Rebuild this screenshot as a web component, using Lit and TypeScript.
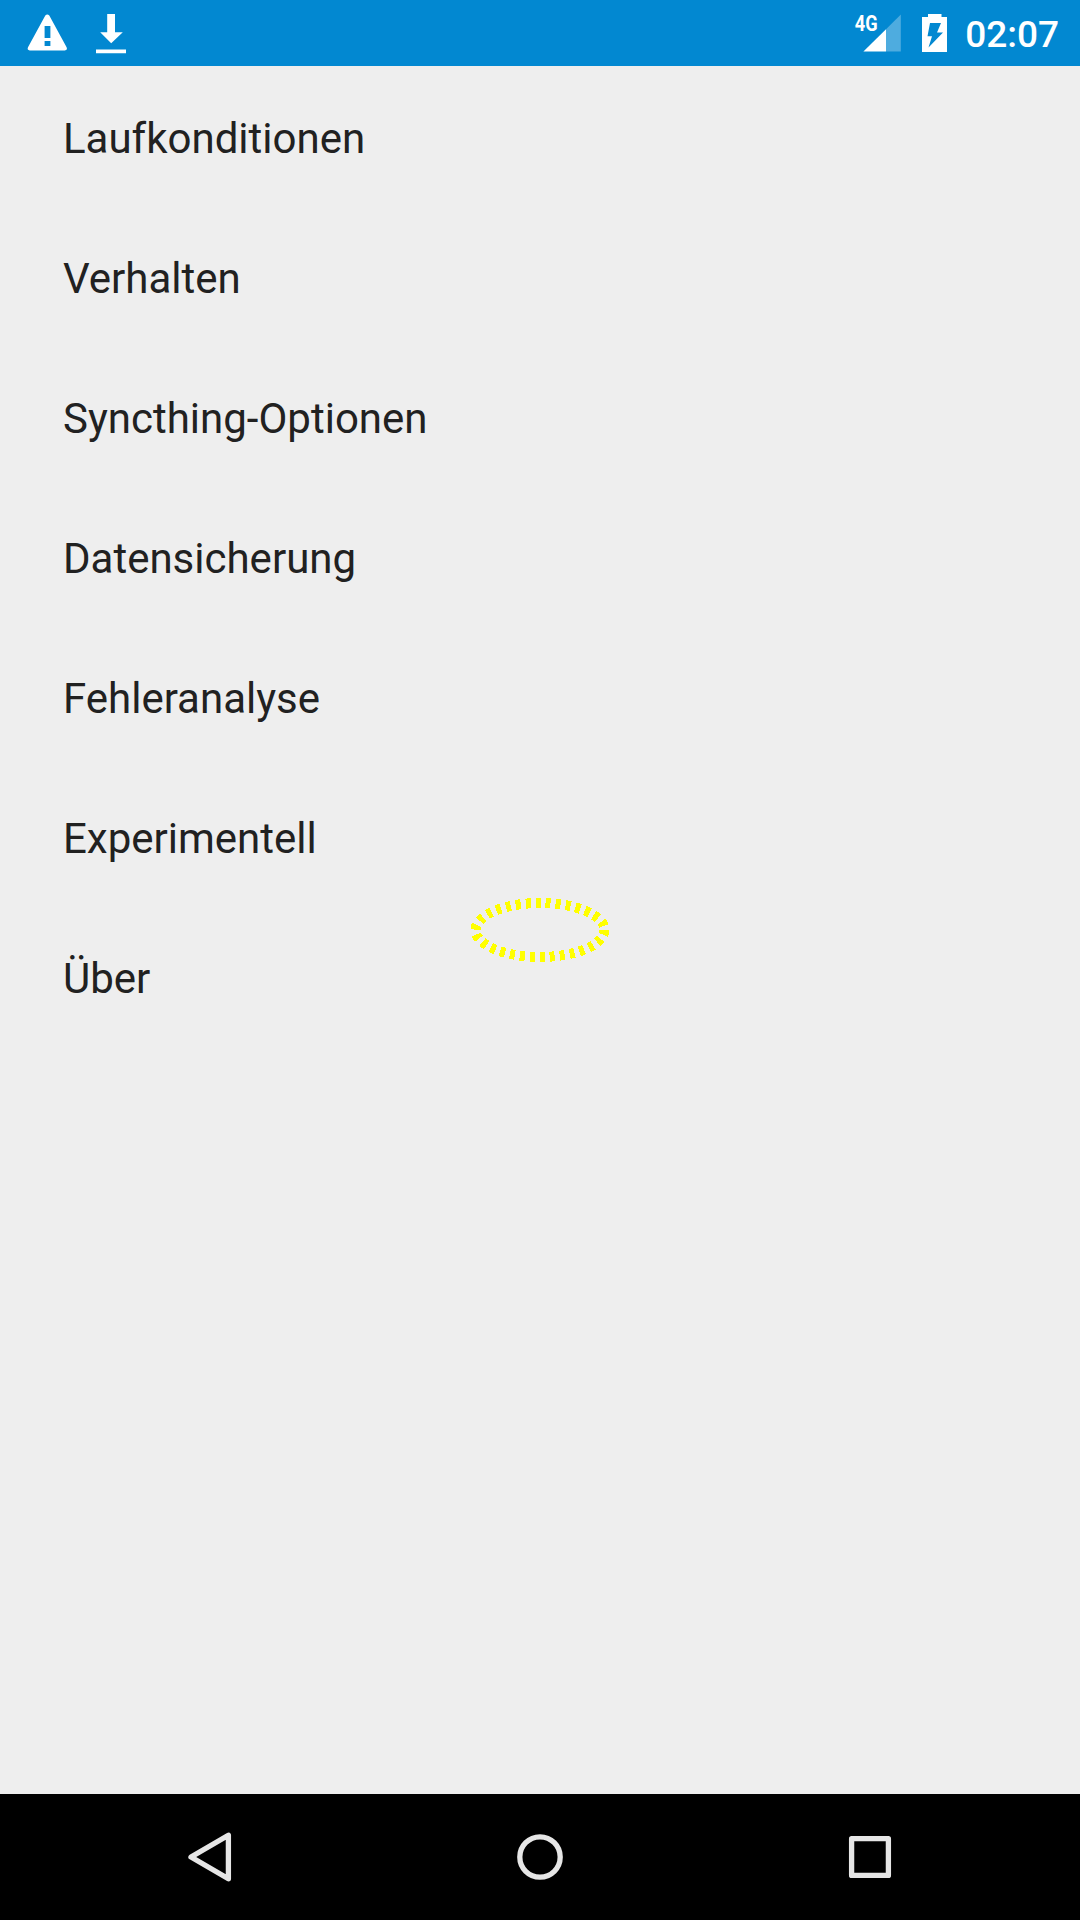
import { LitElement, html, css } from "lit";
import { customElement, property } from "lit/decorators.js";

@customElement("status-bar")
class StatusBar extends LitElement {
  @property() time = "";

  static styles = css`
    :host {
      display: flex;
      justify-content: space-between;
      height: 66px;
      padding: 0 21px 0 18px;
      box-sizing: border-box;
      background: #0288d1;
      color: #fff;
    }
    .group {
      display: flex;
      align-items: center;
    }
    .notifications {
      gap: 6px;
    }
    .icon {
      display: block;
      fill: #fff;
    }
    .signal {
      margin-right: 14px;
    }
    .battery {
      margin-right: 16px;
    }
    .network {
      font: 700 22px Roboto, sans-serif;
    }
    .clock {
      padding-top: 4px;
      font: 500 37px/62px Roboto, sans-serif;
    }
  `;

  render() {
    return html`
      <div class="group notifications">
        <svg class="icon" width="58" height="66" viewBox="18 0 58 66">
          <path
            fill-rule="evenodd"
            d="M45.3 15.6Q47.3 13.2 49.3 15.6L66.6 47.3Q67.8 50.3 64.8 50.4H29.8Q26.8 50.3 28 47.3ZM44.6 26V38H50.4V26ZM44.6 41V46H50.4V41Z"
          />
        </svg>
        <svg class="icon" width="58" height="66" viewBox="82 0 58 66">
          <path d="M107.2 14H115V32.2H122.8L111.2 43.2L100.2 32.2H107.2ZM96 49.5H126V53.3H96Z" />
        </svg>
      </div>
      <div class="group">
        <svg class="icon signal" width="50" height="66" viewBox="853 0 50 66">
          <path opacity="0.3" d="M886 29.2L900.8 14.4V51.5H886Z" />
          <path d="M863.4 51.5L886 29.2V51.5Z" />
          <text class="network" x="854.8" y="31" textLength="22.8" lengthAdjust="spacingAndGlyphs">4G</text>
        </svg>
        <svg class="icon battery" width="32" height="66" viewBox="917 0 32 66">
          <path
            fill-rule="evenodd"
            d="M928 14H941.5V17H947V52H922V17H928ZM930 23L927.5 36.3H932L928.5 47.5L943 32.5H937L941 23Z"
          />
        </svg>
        <span class="clock">${this.time}</span>
      </div>
    `;
  }
}

@customElement("navigation-bar")
class NavigationBar extends LitElement {
  static styles = css`
    :host {
      display: flex;
      height: 126px;
      padding: 0 45px;
      box-sizing: border-box;
      background: #000;
    }
    .button {
      flex: 1;
      display: flex;
      align-items: center;
      justify-content: center;
    }
    .icon {
      display: block;
      fill: none;
      stroke: #e6e6e6;
      stroke-width: 5.3;
      stroke-linejoin: round;
    }
  `;

  render() {
    return html`
      <div class="button">
        <svg class="icon" width="60" height="60" viewBox="0 0 60 60">
          <path d="M48.4 8.2V51.8L11 30Z" />
        </svg>
      </div>
      <div class="button">
        <svg class="icon" width="60" height="60" viewBox="0 0 60 60">
          <circle cx="30" cy="30" r="20.2" />
        </svg>
      </div>
      <div class="button">
        <svg class="icon" width="60" height="60" viewBox="0 0 60 60">
          <rect x="11.6" y="11.6" width="36.8" height="36.8" />
        </svg>
      </div>
    `;
  }
}

@customElement("app-root")
class AppRoot extends LitElement {
  private entries = [
    "Laufkonditionen",
    "Verhalten",
    "Syncthing-Optionen",
    "Datensicherung",
    "Fehleranalyse",
    "Experimentell",
    "Über",
  ];

  static styles = css`
    :host {
      position: relative;
      display: flex;
      flex-direction: column;
      width: 1080px;
      height: 1920px;
      overflow: hidden;
      background: #eee;
      font-family: Roboto, sans-serif;
    }
    .list {
      flex: 1;
      padding-top: 2px;
    }
    .row {
      display: flex;
      align-items: center;
      height: 140px;
      padding: 0 63px;
      box-sizing: border-box;
      font-size: 42px;
      line-height: 49px;
      color: #212121;
    }
    .focus {
      position: absolute;
      left: 465px;
      top: 890px;
      fill: none;
      stroke: #ff0;
      stroke-width: 10;
      stroke-dasharray: 5 5;
      shape-rendering: crispEdges;
    }
  `;

  render() {
    return html`
      <status-bar time="02:07"></status-bar>
      <main class="list">${this.entries.map((entry) => html`<div class="row">${entry}</div>`)}</main>
      <navigation-bar></navigation-bar>
      <svg class="focus" width="150" height="80" viewBox="0 0 150 80">
        <ellipse cx="75" cy="40" rx="64.5" ry="27" />
      </svg>
    `;
  }
}
